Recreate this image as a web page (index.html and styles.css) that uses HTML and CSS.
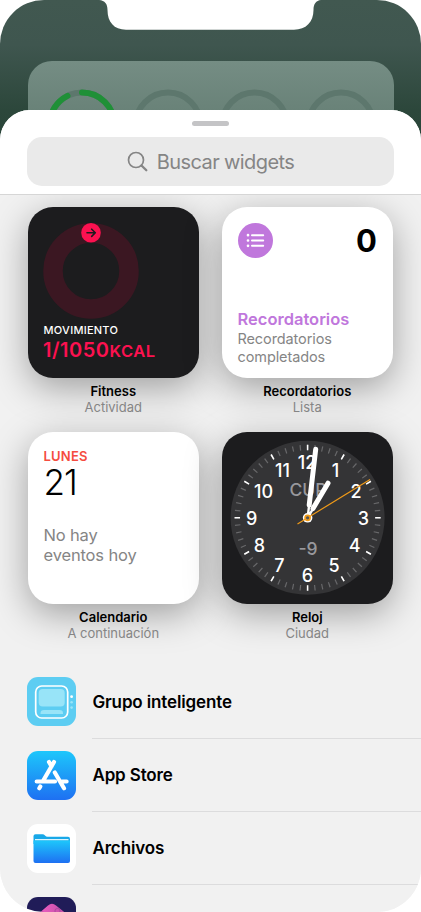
FILE: index.html
```html
<!DOCTYPE html>
<html lang="es">
<head>
<meta charset="utf-8">
<title>Widgets</title>
<link rel="stylesheet" href="styles.css">
</head>
<body>
<div class="phone">
  <div class="notch"><svg width="222" height="30" viewBox="0 0 222 30"><path fill="#fff" d="M0 0C6 .5 8.500 4 8.500 10C8.500 22 15 29.700 27 29.700H195C207 29.700 214.500 22 214.500 10C214.500 4 217 .5 222 0Z"/></svg></div>
  <div class="backdrop">
    <svg width="366" height="80" viewBox="0 0 366 80" fill="none" stroke="#5d776d" stroke-width="6">
      <circle cx="54" cy="64" r="32.500"/><circle cx="140" cy="64" r="32.500"/><circle cx="226.500" cy="64" r="32.500"/><circle cx="313" cy="64" r="32.500"/>
      <path stroke="#1f9037" stroke-linecap="round" d="M54 31.500A32.500 32.500 0 0 1 86.500 64M21.500 64A32.500 32.500 0 0 1 39.500 34.900"/>
    </svg>
  </div>
  <main class="sheet">
    <header class="head">
      <div class="grabber"></div>
      <div class="search">
        <svg width="22" height="22" viewBox="0 0 22 22" fill="none" stroke="#858585"><circle cx="9" cy="9" r="7.500" stroke-width="1.700"/><path d="M14.500 14.500L19.300 19.300" stroke-width="2.300" stroke-linecap="round"/></svg>
        <span>Buscar widgets</span>
      </div>
    </header>
    <section class="grid">
      <article class="item">
        <div class="card dark fitness">
          <svg width="96" height="96" viewBox="0 0 96 96"><circle cx="48" cy="48" r="38" fill="none" stroke="#3b1722" stroke-width="19.500"/><circle cx="48" cy="9.800" r="9.800" fill="#fc1150"/><path d="M44 9.800H52.200M48.700 6.200L52.300 9.800L48.700 13.400" fill="none" stroke="#1c1c1e" stroke-width="1.600" stroke-linecap="round" stroke-linejoin="round"/></svg>
          <div class="move">MOVIMIENTO</div>
          <div class="kcal">1/1050<span>KCAL</span></div>
        </div>
        <h2>Fitness</h2><p>Actividad</p>
      </article>
      <article class="item">
        <div class="card reminders">
          <div class="top">
            <svg width="35" height="35" viewBox="0 0 35 35"><circle cx="17.500" cy="17.500" r="17.500" fill="#c077dc"/><g stroke="#fff" stroke-width="2" stroke-linecap="round"><path d="M14 12.200H25.200M14 17.500H25.200M14 22.800H25.200"/><path stroke-width="2.700" d="M10 12.200H10.010M10 17.500H10.010M10 22.800H10.010"/></g></svg>
            <b>0</b>
          </div>
          <h3>Recordatorios</h3>
          <div class="note">Recordatorios<br>completados</div>
        </div>
        <h2>Recordatorios</h2><p>Lista</p>
      </article>
      <article class="item">
        <div class="card calendar">
          <div class="weekday">LUNES</div>
          <div class="day">21</div>
          <div class="empty">No hay<br>eventos hoy</div>
        </div>
        <h2>Calendario</h2><p>A continuación</p>
      </article>
      <article class="item">
        <div class="card dark">
          <svg class="clock" viewBox="0 0 171.500 171.500">
            <circle cx="85.600" cy="85.800" r="77" fill="#343436"/>
            <circle class="ticks" cx="85.600" cy="85.800" r="70.300" pathLength="360"/>
            <circle class="hours" cx="85.600" cy="85.800" r="70.300" pathLength="360"/>
            <g class="city"><text x="86" y="64">CUP</text><text x="86" y="122.500">-9</text></g>
            <g class="nums"><text x="85" y="37">12</text><text x="113.500" y="45">1</text><text x="134" y="65.500">2</text><text x="141.500" y="92.800">3</text><text x="132.700" y="120.300">4</text><text x="112" y="139.500">5</text><text x="85.400" y="149.600">6</text><text x="57.500" y="139.500">7</text><text x="37.500" y="120.300">8</text><text x="29.700" y="92.800">9</text><text x="41.500" y="65.500">10</text><text x="60.500" y="45">11</text></g>
            <g fill="none" stroke="#fff" stroke-linecap="round"><path stroke-width="2.400" d="M85.600 85.800L94 17M85.600 85.800L106 51.500"/><path stroke-width="5" d="M87.200 73L93.700 17.300M91 76.500L106 51.200"/></g>
            <circle cx="85.600" cy="85.800" r="4.800" fill="#fff"/>
            <path d="M75.500 92L148 47.400" stroke="#f09a18" stroke-width="1.200"/>
            <circle cx="85.600" cy="85.800" r="2.500" fill="#555" stroke="#f09a18" stroke-width="1.700"/>
          </svg>
        </div>
        <h2>Reloj</h2><p>Ciudad</p>
      </article>
    </section>
    <section class="list">
      <div class="row">
        <svg class="icon" viewBox="0 0 49 49"><rect width="49" height="49" rx="11" fill="#5dcdf2"/><rect x="8.700" y="9" width="32" height="32" rx="6" fill="#5dcdf2" stroke="#fff" stroke-width="1.700"/><rect x="11.700" y="12" width="26" height="17.500" rx="4" fill="#98e4f8"/><path d="M13.500 37V36Q13.500 33 17 33H32.500Q36 33 36 36V37Z" fill="#98e4f8"/><circle cx="44.600" cy="19.700" r="1.400" fill="#fff"/><circle cx="44.600" cy="25.300" r="1.300" fill="#98e4f8"/><circle cx="44.600" cy="30.600" r="1.300" fill="#98e4f8"/></svg>
        <span>Grupo inteligente</span>
      </div>
      <div class="row">
        <svg class="icon" viewBox="0 0 49 49"><defs><linearGradient id="blue" x2="0" y2="1"><stop stop-color="#1dc7fb"/><stop offset="1" stop-color="#1e70f2"/></linearGradient></defs><rect width="49" height="49" rx="11" fill="url(#blue)"/><g fill="none" stroke="#fff" stroke-width="4.200" stroke-linecap="round"><path d="M27 11L16.300 29.500M22 11L24.500 15.300M27.800 21.500L37 37.300M9.700 30.500H28M35.300 30.500H39.600M13.300 35.500L12.300 37.200"/></g></svg>
        <span>App Store</span>
      </div>
      <div class="row">
        <svg class="icon" viewBox="0 0 49 49"><rect width="49" height="49" rx="11" fill="#fff"/><path d="M6.500 13V12Q6.500 10.300 8.500 10.300H15.500Q17 10.300 18 11.600Q19 12.800 20.500 12.800H41Q43 12.800 43 15V20H6.500Z" fill="#18a8e8"/><path d="M6.500 16.500H43V37Q43 39 41 39H8.500Q6.500 39 6.500 37Z" fill="url(#blue)"/><path d="M8 15.700H41.500" stroke="#d9f4ff" stroke-width="1.300"/></svg>
        <span>Archivos</span>
      </div>
      <div class="row">
        <svg class="icon" viewBox="0 0 49 49"><defs><linearGradient id="pink"><stop stop-color="#f260c4"/><stop offset="1" stop-color="#bd4da5"/></linearGradient></defs><rect width="49" height="49" rx="11" fill="#201c58"/><path d="M10 18L21 8.500Q25 5 29 8.500L41 18L25 32Z" fill="url(#pink)"/><circle cx="30.500" cy="14" r="2.600" fill="none" stroke="#a94a9e"/></svg>
      </div>
    </section>
  </main>
</div>
</body>
</html>
```
FILE: styles.css
```css
* { box-sizing: border-box; }
body { margin: 0; background: #fff; font-family: Inter, sans-serif; color: #000; }
h2, h3, p { margin: 0; }
svg { display: block; flex: none; }
.phone { position: relative; width: 421px; height: 912px; overflow: hidden; border-radius: 44px; background: linear-gradient(#415850 0, #3f564f 45px, #2c473b 110px, #294438 150px, #f1f1f1 160px); }
.notch { position: absolute; left: 99px; top: 0; }
.backdrop { position: absolute; left: 27.5px; top: 61px; width: 366px; height: 80px; border-radius: 24px 24px 0 0; background: linear-gradient(#758d84, #698278 50px); }
.sheet { position: relative; margin-top: 110px; height: 802px; border-radius: 30px 30px 0 0; background: #f1f1f1; overflow: hidden; }
.head { position: relative; z-index: 1; height: 85px; padding: 11px 27.4px 0; background: #fff; border-bottom: 1px solid #d6d6d6; }
.grabber { width: 37px; height: 5px; margin: 0 auto 11.400px; border-radius: 3px; background: #c4c4c6; }
.search { height: 48.5px; border-radius: 15px; background: #eaeaea; display: flex; align-items: center; justify-content: center; gap: 8px; color: #858585; font-size: 20px; letter-spacing: -.6px; }
.grid { display: grid; grid-template-columns: 171.5px 171.5px; column-gap: 22.500px; row-gap: 17px; padding: 11.500px 27.5px 0; height: 471.500px; align-content: start; }
.item { text-align: center; font-size: 13px; line-height: 16px; }
.item h2 { position: relative; margin-top: 5px; font-size: 13px; line-height: 16px; font-weight: 600; }
.item p { position: relative; color: #858585; }
.card { height: 171.5px; border-radius: 25px; background: #fff; box-shadow: 0 10px 36px rgba(0, 0, 0, .34); text-align: left; }
.dark { background: #1c1c1e; }
.fitness { padding: 16px 15.500px; }
.move { margin: 4px 0 0 .5px; color: #fff; font-size: 11px; line-height: 14px; font-weight: 500; letter-spacing: .25px; }
.kcal { color: #fc1150; font-size: 20px; line-height: 27px; font-weight: 600; white-space: nowrap; letter-spacing: .5px; }
.kcal span { font-size: 16.500px; }
.reminders { padding: 16px; }
.top { display: flex; justify-content: space-between; height: 86px; }
.top b { font-size: 31px; line-height: 35px; font-weight: 700; }
.reminders h3 { font-size: 16.500px; line-height: 20px; font-weight: 600; color: #c077dc; }
.note { font-size: 14.500px; line-height: 18px; color: #858585; padding-top: 1.500px; letter-spacing: -.1px; }
.calendar { padding: 16px; }
.weekday { color: #f54c40; font-size: 13px; line-height: 17px; font-weight: 600; letter-spacing: .2px; }
.day { font-size: 35px; line-height: 43px; margin-top: -4px; font-weight: 300; letter-spacing: -1px; }
.empty { margin-top: 21px; font-size: 16.500px; line-height: 20px; color: #858585; letter-spacing: -.15px; }
.clock { width: 171.5px; height: 171.5px; font-family: Inter, sans-serif; font-size: 18px; text-anchor: middle; }
.ticks, .hours { fill: none; stroke-width: 5.500; }
.ticks { stroke: #68686a; stroke-dasharray: 1 5; stroke-dashoffset: .5; }
.hours { stroke: #fff; stroke-dasharray: 1.300 28.700; stroke-dashoffset: .65; }
.city { fill: #98989c; font-size: 17.500px; font-weight: 500; }
.nums { fill: #fff; font-weight: 500; }
.row { height: 73.200px; display: flex; gap: 16px; padding-left: 27.4px; }
.list { margin-top: -.7px; }
.icon { width: 49px; height: 49px; margin-top: 11.500px; }
.row span { flex: 1; padding-top: 25px; border-bottom: 1px solid #dcdcdd; font-size: 17px; line-height: 22px; font-weight: 600; letter-spacing: -.13px; }
```
